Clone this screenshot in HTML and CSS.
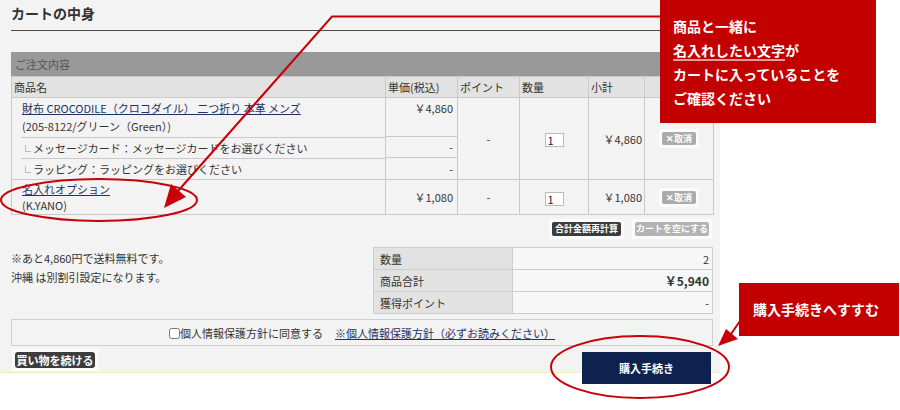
FILE: index.html
```html
<!DOCTYPE html>
<html lang="ja">
<head>
<meta charset="utf-8">
<title>カートの中身</title>
<link rel="stylesheet" href="styles.css">
</head>
<body>
<div class="page">
  <h1 class="title">カートの中身</h1>

  <section class="order">
    <div class="bar">ご注文内容</div>
    <table class="cart">
      <colgroup>
        <col class="c-name"><col class="c-price"><col class="c-point"><col class="c-qty"><col class="c-sub"><col class="c-del">
      </colgroup>
      <thead>
        <tr><th>商品名</th><th>単価(税込)</th><th>ポイント</th><th>数量</th><th>小計</th><th></th></tr>
      </thead>
      <tbody>
        <tr class="r-prod">
          <td class="name top"><a href="#">財布 CROCODILE（クロコダイル） 二つ折り 本革 メンズ</a><br>(205-8122/グリーン（Green）)</td>
          <td class="price top">￥4,860</td>
          <td class="point" rowspan="3">-</td>
          <td class="qty" rowspan="3"><input class="qty-in" type="text" value="1"></td>
          <td class="subtotal" rowspan="3">￥4,860</td>
          <td class="del" rowspan="3"><span class="bw"><span class="cancel">✕取消</span></span></td>
        </tr>
        <tr class="r-sub1">
          <td class="name sub"><div class="subline"><span class="elbow"></span>メッセージカード：メッセージカードをお選びください</div></td>
          <td class="price">-</td>
        </tr>
        <tr class="r-sub2">
          <td class="name sub last"><div class="subline"><span class="elbow"></span>ラッピング：ラッピングをお選びください</div></td>
          <td class="price">-</td>
        </tr>
        <tr class="r-opt">
          <td class="name opt"><a href="#">名入れオプション</a><br>(K.YANO)</td>
          <td class="price">￥1,080</td>
          <td class="point">-</td>
          <td class="qty"><input class="qty-in" type="text" value="1"></td>
          <td class="subtotal">￥1,080</td>
          <td class="del"><span class="bw"><span class="cancel">✕取消</span></span></td>
        </tr>
      </tbody>
    </table>
    <div class="actions">
      <span class="bw"><span class="btn btn-recalc">合計金額再計算</span></span>
      <span class="bw"><span class="btn btn-empty">カートを空にする</span></span>
    </div>
  </section>

  <div class="summary-row">
    <div class="notes">
      <p>※あと4,860円で送料無料です。</p>
      <p>沖縄 は別割引設定になります。</p>
    </div>
    <table class="summary">
      <tr><th>数量</th><td>2</td></tr>
      <tr><th>商品合計</th><td class="strong">￥5,940</td></tr>
      <tr><th>獲得ポイント</th><td>-</td></tr>
    </table>
  </div>

  <div class="privacy">
    <input class="agree" type="checkbox"><span class="agree-label">個人情報保護方針に同意する</span><a href="#" class="policy">※個人情報保護方針（必ずお読みください）</a>
  </div>

  <div class="bottom">
    <span class="bw bw-cont"><span class="btn-cont">買い物を続ける</span></span>
    <span class="btn-buy">購入手続き</span>
  </div>
</div>

<div class="callout callout-top">
  <p>商品と一緒に</p>
  <p><span class="ul">名入れしたい文字</span>が</p>
  <p>カートに入っていることを</p>
  <p>ご確認ください</p>
</div>
<div class="callout callout-bottom">購入手続きへすすむ</div>

<svg class="annot" width="900" height="410" viewBox="0 0 900 410">
  <polyline points="660,16.5 332,16.5 178,191" fill="none" stroke="#c8000a" stroke-width="2"/>
  <polygon points="164,208 186,197 171,184" fill="#c8000a"/>
  <ellipse cx="99" cy="200" rx="98" ry="21" fill="none" stroke="#c8000a" stroke-width="2"/>
  <line x1="740" y1="321" x2="731" y2="334" stroke="#c8000a" stroke-width="2"/>
  <polygon points="718,346 726,329 738,339" fill="#c8000a"/>
  <ellipse cx="640" cy="367" rx="89" ry="31" fill="none" stroke="#c8000a" stroke-width="2"/>
</svg>
</body>
</html>
```

FILE: styles.css
```css
* { box-sizing: border-box; }
body {
  margin: 0;
  width: 900px;
  height: 410px;
  position: relative;
  overflow: hidden;
  background: #fff;
  font-family: "Noto Sans CJK JP", "Noto Sans", sans-serif;
  font-size: 11px;
  color: #333;
}
p { margin: 0; }
a { color: #1f3264; text-decoration: underline; }

.page {
  width: 720px;
  height: 373px;
  padding: 0 7px 0 11px;
  background: #f3f3f3;
  border-bottom: 1px solid #f3ebc3;
}
.title {
  margin: 0;
  height: 31px;
  padding-top: 4px;
  font-size: 14px;
  line-height: 18px;
  font-weight: bold;
  color: #333;
  border-bottom: 1px solid #4a4a4a;
}

.bar {
  margin-top: 21px;
  height: 24px;
  line-height: 24px;
  padding-left: 4px;
  background: #999;
  color: #555;
}

.cart {
  width: 702px;
  border-collapse: collapse;
  table-layout: fixed;
}
.c-name { width: 374px; }
.c-price { width: 72px; }
.c-point { width: 62px; }
.c-qty { width: 69px; }
.c-sub { width: 56px; }
.c-del { width: 69px; }
.cart th, .cart td {
  border: 1px solid #c9c9c9;
  padding: 0;
  vertical-align: middle;
  font-weight: normal;
}
.cart thead th {
  height: 21px;
  padding: 0 2px;
  text-align: left;
  background: #e2e2e2;
}
.cart .top { vertical-align: top; }
.r-prod td { height: 39px; }
.r-sub1 td { height: 21px; }
.r-sub2 td { height: 22px; }
.r-opt td { height: 35px; }

.name.top { padding: 1px 0 0 10px; line-height: 18px; border-bottom: none; }
.name.opt { padding-left: 10px; line-height: 16px; }
.name.sub { border-top: none; border-bottom: none; }
.name.sub.last { border-bottom: 1px solid #c9c9c9; }
.subline {
  margin-left: 9px;
  border-top: 1px solid #c9c9c9;
  padding-left: 4px;
  line-height: 20px;
}
.elbow {
  display: inline-block;
  width: 6px;
  height: 7px;
  margin-right: 2px;
  border-left: 1px solid #bdbdbd;
  border-bottom: 1px solid #bdbdbd;
  vertical-align: 1px;
}
.price { text-align: right; padding-right: 4px !important; line-height: 18px; }
.price.top { padding-top: 1px !important; }
.point { text-align: center; }
.qty { text-align: center; }
.subtotal { text-align: right; padding-right: 2px !important; }
.del { text-align: center; }

.qty-in {
  width: 19px;
  height: 14px;
  padding: 0 2px;
  margin: 0;
  border: 1px solid #bbb;
  background: #fff;
  font-family: "Noto Sans CJK JP", sans-serif;
  font-size: 11px;
  color: #222;
  vertical-align: middle;
}

.bw {
  display: inline-block;
  padding: 3px;
  background: #fbfbfb;
  line-height: 0;
}
.cancel {
  display: inline-block;
  width: 34px;
  height: 13px;
  line-height: 13px;
  background: #ababab;
  color: #fff;
  font-size: 9px;
  font-weight: bold;
  text-align: center;
  border-radius: 2px;
}

.actions {
  display: flex;
  justify-content: flex-end;
  gap: 8px;
  margin-top: 4px;
  padding-right: 1px;
}
.btn {
  display: inline-block;
  height: 14px;
  line-height: 14px;
  font-size: 9px;
  font-weight: bold;
  color: #fff;
  text-align: center;
  border-radius: 2px;
}
.btn-recalc { width: 69px; background: #3b3b3b; }
.btn-empty { width: 74px; background: #b3b3b3; }

.summary-row {
  display: flex;
  justify-content: space-between;
  align-items: flex-start;
  margin-top: 8px;
}
.notes { padding-top: 2px; line-height: 19px; }
.summary {
  width: 340px;
  border-collapse: collapse;
}
.summary th, .summary td {
  height: 22px;
  padding: 0;
  border: 1px solid #cdcdcd;
}
.summary th {
  width: 139px;
  padding-left: 6px;
  text-align: left;
  font-weight: normal;
  background: #e2e2e2;
}
.summary td {
  text-align: right;
  padding-right: 3px;
  background: #f7f7f7;
}
.summary td.strong { font-weight: bold; font-size: 12px; }

.privacy {
  margin-top: 5px;
  height: 27px;
  border: 1px solid #cfcfcf;
  display: flex;
  justify-content: center;
  align-items: center;
}
.agree {
  width: 11px;
  height: 11px;
  margin: 2px 0 0 0;
}
.agree-label { margin-right: 12px; }

.bottom {
  display: flex;
  justify-content: space-between;
  align-items: flex-start;
  margin-top: 3px;
}
.bw-cont { margin-left: 1px; }
.btn-cont {
  display: inline-block;
  width: 80px;
  height: 16px;
  line-height: 16px;
  background: #3d3d3d;
  color: #fff;
  font-weight: bold;
  font-size: 11px;
  text-align: center;
  border-radius: 3px;
}
.btn-buy {
  display: inline-block;
  margin-top: 3px;
  margin-right: 2px;
  width: 129px;
  height: 32px;
  line-height: 32px;
  background: #0e2250;
  color: #fff;
  font-weight: bold;
  text-align: center;
}

.callout {
  position: absolute;
  background: #c20000;
  color: #fff;
  font-weight: bold;
  font-size: 14px;
}
.callout-top {
  left: 660px;
  top: 0;
  width: 216px;
  height: 123px;
  padding: 14px 0 0 13px;
  line-height: 24px;
}
.ul {
  display: inline-block;
  line-height: 17px;
  border-bottom: 2px solid #e59c9c;
}
.callout-bottom {
  left: 739px;
  top: 283px;
  width: 160px;
  height: 53px;
  line-height: 53px;
  padding-left: 14px;
}

.annot {
  position: absolute;
  left: 0;
  top: 0;
  pointer-events: none;
}
```
